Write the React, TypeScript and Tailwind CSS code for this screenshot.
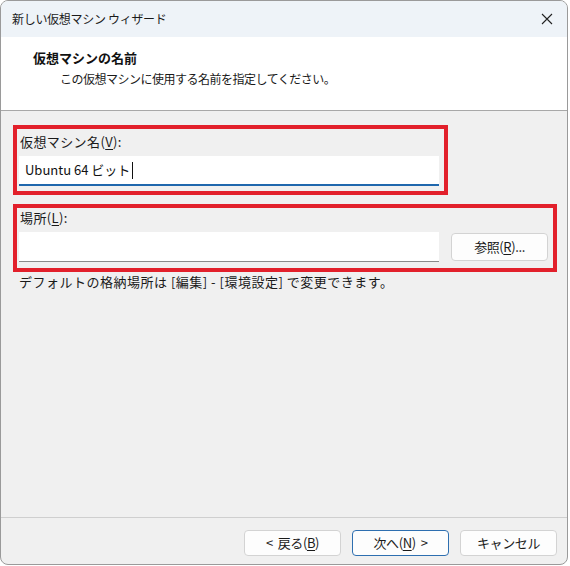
import React from "react";

const jp = "font-['Noto_Sans_CJK_JP','Noto_Sans',sans-serif]";

function Accel({ children }: { children: React.ReactNode }) {
  return <span className="underline underline-offset-2">{children}</span>;
}

function WizButton({
  children,
  primary,
  className = "",
}: {
  children: React.ReactNode;
  primary?: boolean;
  className?: string;
}) {
  return (
    <button
      className={`h-[26px] w-[97px] rounded-[4px] bg-[#fdfdfd] text-[13px] tracking-[-0.4px] text-[#1a1a1a] ${
        primary ? "border border-[#2e6fb0]" : "border border-[#d3d3d3]"
      } ${className}`}
    >
      {children}
    </button>
  );
}

export default function App() {
  return (
    <div className={`w-[570px] h-[566px] bg-white ${jp}`}>
      <div className="w-[568px] h-[565px] flex flex-col rounded-[8px] overflow-hidden border border-[#9a9a9a] bg-[#f0f0f0]">
        {/* タイトルバー */}
        <div className="h-[36px] shrink-0 bg-[#eef3f8] flex items-center justify-between pl-[11px] pr-[14px]">
          <span className="text-[12px] text-[#1a1a1a] tracking-[-0.3px]">新しい仮想マシン ウィザード</span>
          <svg width="12" height="12" viewBox="0 0 12 12" className="text-[#222]">
            <path d="M1 1 L11 11 M11 1 L1 11" stroke="currentColor" strokeWidth="1.1" />
          </svg>
        </div>

        {/* ヘッダー */}
        <div className="h-[74px] shrink-0 bg-white border-b border-[#a8a8a8] pl-[32px] pt-[10px]">
          <div className="text-[13px] font-bold text-[#111] leading-[22px]">仮想マシンの名前</div>
          <div className="text-[12px] text-[#1a1a1a] leading-[20px] pl-[27px] tracking-[-0.5px]">
            この仮想マシンに使用する名前を指定してください。
          </div>
        </div>

        {/* 本体 */}
        <div className="flex-1 pl-[12px] pt-[14px]">
          <div className="w-[435px] h-[70px] border-[4px] border-[#e2202b] pl-[2px] pt-[3px]">
            <div className="text-[13px] text-[#1a1a1a] leading-[20px] pl-[1px] tracking-[0.4px]">
              仮想マシン名(<Accel>V</Accel>):
            </div>
            <div className="mt-[4px] w-[420px] h-[30px] bg-white border-b-2 border-[#1f67ad] flex items-center pl-[6px]">
              <span className="text-[13px] text-[#111]">Ubuntu 64 ビット</span>
              <span className="ml-[2px] w-px h-[17px] bg-[#111]" />
            </div>
          </div>

          <div className="mt-[9px] w-[544px] h-[68px] border-[4px] border-[#e2202b] pl-[2px]">
            <div className="text-[13px] text-[#1a1a1a] leading-[20px] pl-[1px] tracking-[0.4px]">
              場所(<Accel>L</Accel>):
            </div>
            <div className="mt-[4px] flex items-center">
              <div className="w-[420px] h-[30px] bg-white border-b border-[#8a8a8a]" />
              <WizButton className="ml-[12px] h-[28px]">
                参照(<Accel>R</Accel>)...
              </WizButton>
            </div>
          </div>

          <div className="pl-[6px] text-[13px] text-[#1a1a1a] leading-[20px] tracking-[0.5px] whitespace-pre">
            デフォルトの格納場所は [編集] - [環境設定] で変更できます。
          </div>
        </div>

        {/* フッター */}
        <div className="h-[47px] shrink-0 border-t border-[#cfcfcf] flex items-center justify-end gap-[11px] pr-[10px] pt-[3px]">
          <WizButton>
            &lt;<span className="ml-[5px]">戻る(<Accel>B</Accel>)</span>
          </WizButton>
          <WizButton primary>
            <span className="mr-[5px]">次へ(<Accel>N</Accel>)</span>&gt;
          </WizButton>
          <WizButton>キャンセル</WizButton>
        </div>
      </div>
    </div>
  );
}
